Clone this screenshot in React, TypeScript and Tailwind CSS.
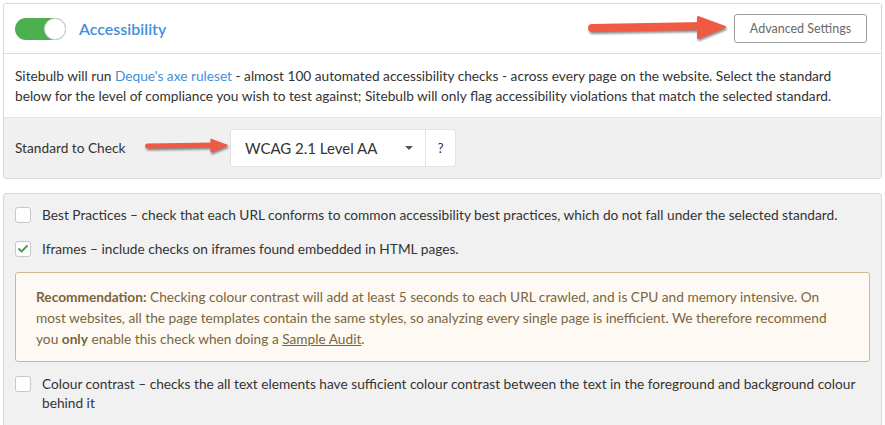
import { Check } from 'lucide-react';

function Arrow({ className }: { className: string }) {
  return (
    <svg
      className={`absolute drop-shadow-[1px_2px_1px_rgba(0,0,0,0.45)] ${className}`}
      viewBox="0 0 140 24"
      fill="none"
    >
      <path d="M4 12 L116 10" stroke="#f05a44" strokeWidth="8" strokeLinecap="round" />
      <path d="M110 1 L137 11 L110 22 Z" fill="#f05a44" stroke="#f05a44" strokeWidth="2" strokeLinejoin="round" />
    </svg>
  );
}

function Checkbox({ checked }: { checked?: boolean }) {
  return (
    <span className="mt-[2px] flex h-[16px] w-[16px] shrink-0 items-center justify-center rounded-[3px] border border-[#c8c8c8] bg-white">
      {checked && <Check className="h-[12px] w-[12px] text-[#3ea84a]" strokeWidth={4} />}
    </span>
  );
}

export default function App() {
  return (
    <div className="relative min-h-[425px] bg-white px-[3px] pt-[3px] text-[13.7px] leading-[20px] text-[#333] font-['Lato','Liberation_Sans',sans-serif]">
      <div className="overflow-hidden rounded-[3px] border border-[#d8d8d8]">
        <div className="flex h-[50px] items-center border-b border-[#dcdcdc] bg-white pl-[11px] pr-[14px]">
          <span className="relative h-[22px] w-[51px] rounded-full bg-[#4caf50]">
            <span className="absolute right-0 top-0 h-[22px] w-[22px] rounded-full border border-[#d6d6d6] bg-white" />
          </span>
          <span className="ml-[13px] text-[16px] font-semibold text-[#3f8fdc]">Accessibility</span>
          <button className="ml-auto h-[29px] w-[133px] rounded-[3px] border border-[#9c9c9c] bg-white text-[12.5px] text-[#6a6a6a]">
            Advanced Settings
          </button>
        </div>
        <p className="bg-white pb-[11px] pl-[11px] pr-[30px] pt-[12px]">
          Sitebulb will run <span className="text-[#3f8fdc]">Deque's axe ruleset</span> - almost 100 automated accessibility
          checks - across every page on the website. Select the standard below for the level of compliance you wish to test
          against; Sitebulb will only flag accessibility violations that match the selected standard.
        </p>
        <div className="flex items-center border-t border-[#e4e4e4] bg-[#f0f0f0] px-[11px] py-[11px]">
          <span className="w-[215px]">Standard to Check</span>
          <div className="flex h-[38px] w-[226px] rounded-[3px] border border-[#e2e2e2] bg-white">
            <div className="flex flex-1 items-center pl-[14px] pr-[12px] text-[15px]">
              WCAG 2.1 Level AA
              <span className="ml-auto h-0 w-0 border-x-[4px] border-t-[4px] border-x-transparent border-t-[#555]" />
            </div>
            <div className="flex w-[30px] items-center justify-center border-l border-[#e2e2e2]">?</div>
          </div>
        </div>
      </div>

      <div className="mt-[14px] rounded-[3px] border border-[#d8d8d8] bg-[#f1f1f1] px-[11px] pb-[14px] pt-[11px]">
        <label className="flex items-start gap-[11px]">
          <Checkbox />
          <span>
            Best Practices – check that each URL conforms to common accessibility best practices, which do not fall under
            the selected standard.
          </span>
        </label>
        <label className="mt-[14px] flex items-start gap-[11px]">
          <Checkbox checked />
          <span>Iframes – include checks on iframes found embedded in HTML pages.</span>
        </label>
        <div className="mt-[13px] rounded-[3px] border border-[#cdb992] bg-[#fefaf3] pb-[12px] pl-[20px] pr-[30px] pt-[13px] leading-[21px] text-[#7a6540]">
          <b className="font-bold">Recommendation:</b> Checking colour contrast will add at least 5 seconds to each URL
          crawled, and is CPU and memory intensive. On most websites, all the page templates contain the same styles, so
          analyzing every single page is inefficient. We therefore recommend you <b className="font-bold">only</b> enable
          this check when doing a <span className="underline">Sample Audit</span>.
        </div>
        <label className="mt-[12px] flex items-start gap-[11px]">
          <Checkbox />
          <span className="leading-[19px]">
            Colour contrast – checks the all text elements have sufficient colour contrast between the text in the
            foreground and background colour behind it
          </span>
        </label>
      </div>

      <Arrow className="left-[588px] top-[16px] h-[24px] w-[140px]" />
      <Arrow className="left-[145px] top-[134px] h-[24px] w-[84px]" />
    </div>
  );
}
